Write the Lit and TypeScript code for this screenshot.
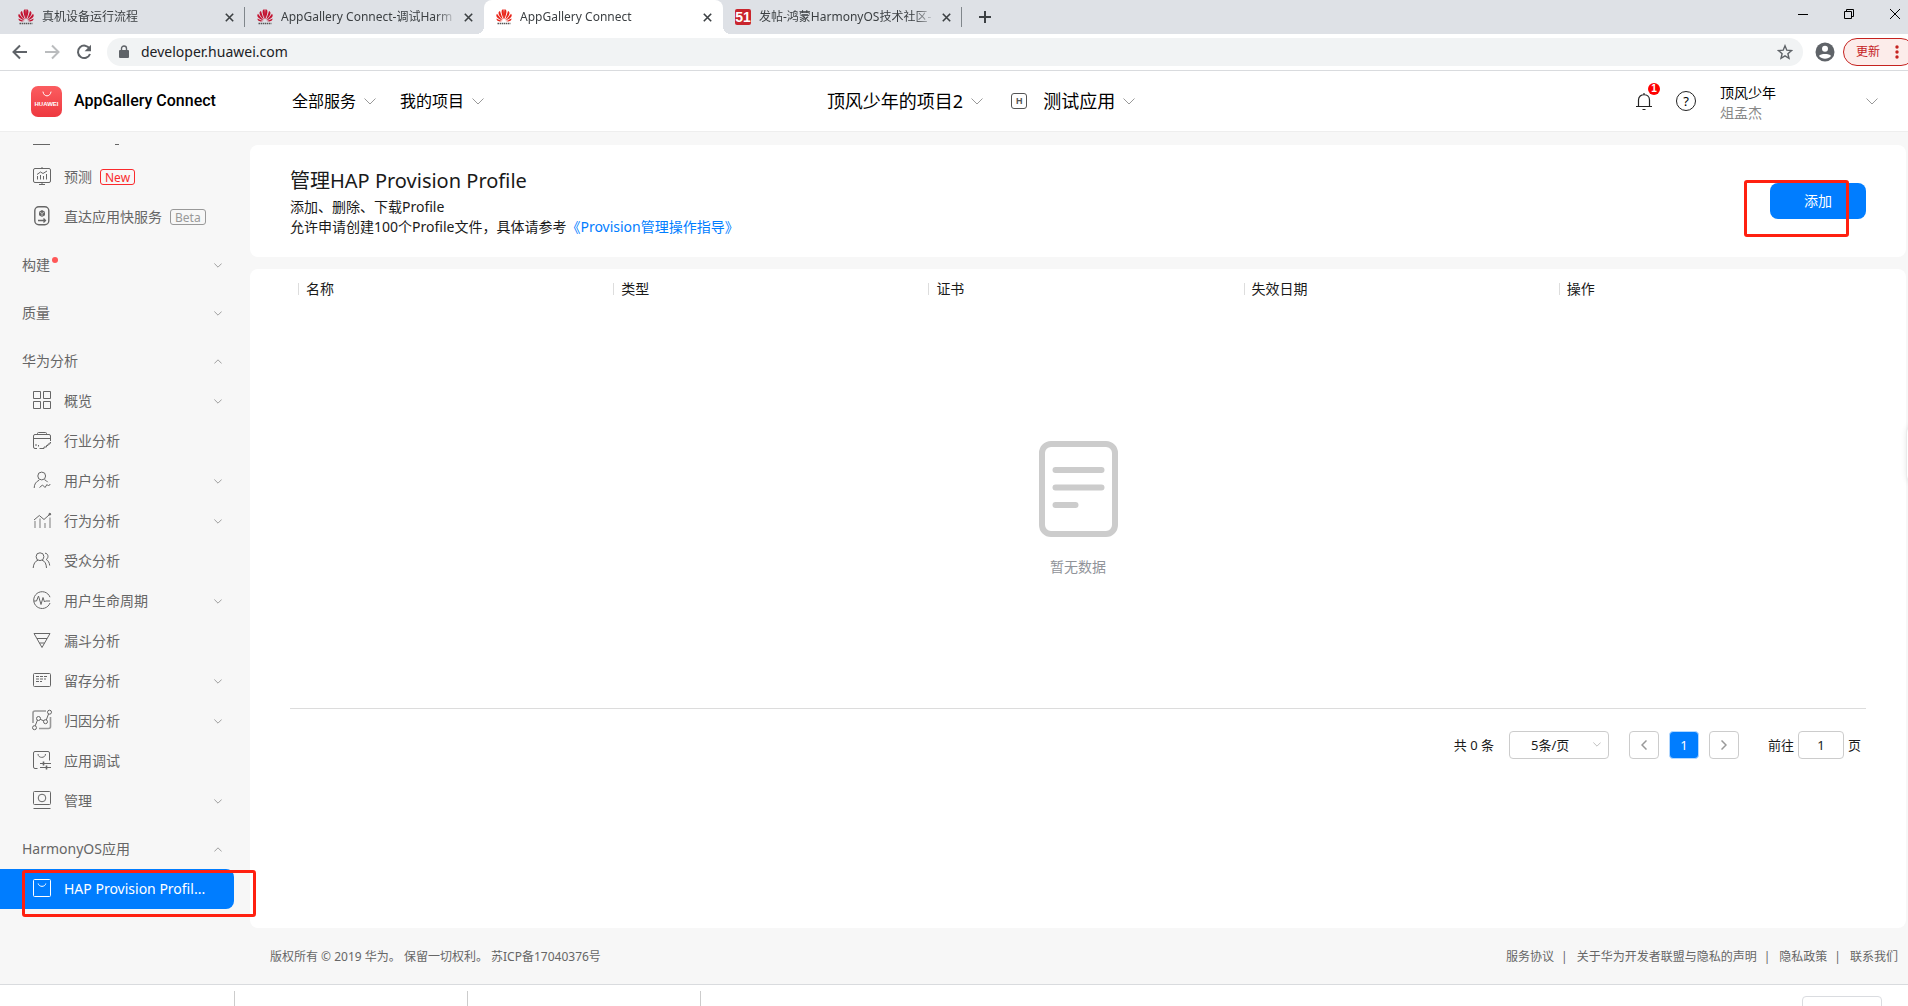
import { LitElement, html, css, svg, nothing } from "lit";
import { customElement } from "lit/decorators.js";
import { classMap } from "lit/directives/class-map.js";

const icons: Record<string, unknown> = {
  predict: svg`<rect x="1.5" y="1.5" width="17" height="14" rx="1.5"/><path d="M10 0v1.5M7 17.5h6M10 15.5v2M5.5 12.500V9M8.500 12.500V8M11.500 12.500V9M14.500 12.500V7M5 7.500L8.500 5l2.500 1.500L15 4"/>`,
  quick: svg`<rect x="2.800" y="-.2" width="14" height="18" rx="4" stroke-width="1.400"/><path d="M10 3l3 1.700v3.500l-3 1.800-3-1.800V4.700z" fill="currentColor" stroke="none"/><path d="M10 6.500l2.500-1.500M10 6.500L7.500 5M10 6.500v3" stroke="#f7f7f7" stroke-width=".6"/><path d="M6 13.500h7.500M11.500 11.500l2 2-2 2" stroke-width="1.300"/>`,
  grid: svg`<path d="M1.500.5h7v7h-7zM11.500.5h7v7h-7zM1.500 10.500h7v7h-7zM11.500 10.500h7v7h-7z"/>`,
  industry: svg`<path d="M5.500 3.500v-1a1 1 0 0 1 1-1h7a1 1 0 0 1 1 1v1M1.500 7.500h17.500M18.500 10V5a1.500 1.500 0 0 0-1.500-1.500H3A1.500 1.500 0 0 0 1.500 5v11A1.500 1.500 0 0 0 3 17.500h2M7.500 17.500h4.500v-1.500h2.500v-1.500h1.500v-1.500h2v-1.500h1M4 13v2M6.500 14v1.500"/>`,
  user: svg`<circle cx="9.700" cy="5" r="3.900"/><path d="M2.200 17c0-4 2-6.500 5-7.800M12.500 8.700c1.500.6 2.500 1.500 3.200 2.500M7.500 16.500l3-2.500 2.500 2.500 2-3 1.500 1.500 1.800-2"/>`,
  behavior: svg`<path d="M3 17v-7M8 17V7.500M13 17v-5M18 17V6.500" stroke="#aaa" stroke-width="1.600"/><path d="M2 9l5.300-4.500L12 8.500 17 4"/><circle cx="17.800" cy="3.200" r=".9" fill="currentColor"/>`,
  audience: svg`<circle cx="8" cy="5.700" r="3.900"/><path d="M1.200 17c.2-4 2-7 4.800-7.800M10 9.200c3 .8 4.300 3.800 4.500 7.800M13 2.200c3.200 0 4.200 4.600 1.200 6.300 2 1 3.300 3.300 3.500 6"/>`,
  life: svg`<path d="M18 6.200A8.400 8.400 0 1 0 18 12M2 10h2.500L6.500 5 9 13.500l2-7 1.500 4.500 1-1H18"/>`,
  funnel: svg`<path d="M2 2.500h16L10 16.500zM5 7.500h10M7.500 12h5"/>`,
  retain: svg`<rect x="1.500" y="2.500" width="17" height="13" rx="1"/><path d="M4 5.500h3M8 5.500h3M12 5.500h3M4 8h3M8 8h3M12 8h2M4 10.500h3M8 10.500h2"/>`,
  attrib: svg`<path d="M14 0H3a2 2 0 0 0-2 2v10M18.500 6v9.500a2 2 0 0 1-2 2H7" stroke="#999" stroke-width="1.600"/><path d="M3.200 14.800L5.500 9M8 8.200l4 1.800M14.200 9.200l2.500-6.600"/><circle cx="2.500" cy="16.700" r="2"/><circle cx="6.500" cy="7.500" r="2"/><circle cx="13.500" cy="10.700" r="2"/><circle cx="17.500" cy="1.200" r="2"/>`,
  debug: svg`<path d="M17.500 9.500V2a1.500 1.500 0 0 0-1.500-1.500H3A1.500 1.500 0 0 0 1.500 2v14A1.500 1.500 0 0 0 3 17.500h2.500M6 3c0 4.500 7.500 4.500 7.500 0M8 12.500h11M8 16.500h11"/><path d="M11.500 10.500v4M14.500 14.500v4" stroke-width="1.600"/>`,
  manage: svg`<rect x="1.500" y=".5" width="17" height="13" rx="1"/><circle cx="10" cy="7" r="3.800"/><path d="M1.500 17.500h17"/>`,
  bag: svg`<rect x="1.500" y=".5" width="17" height="17" rx="1"/><path d="M6.200 4.500c.6 3.800 7 3.800 7.600 0"/>`,
};

const icon = (name: string) =>
  html`<svg class="icon" viewBox="0 0 20 20" aria-hidden="true">${icons[name]}</svg>`;

const chevron = (up = false, size = 8) => html`<svg
  class=${classMap({ chev: true, big: size > 8, up })}
  viewBox="0 0 12 7" aria-hidden="true"><path d="M.5.500L6 6l5.500-5.500"/></svg>`;

const petals = (color: string) => html`<svg class="favicon" viewBox="0 0 16 16" aria-hidden="true">
  <g fill=${color}>
    <path d="M7.700 10.500C6.500 7 5 3.500 5.700 1.500 6 .6 7 .2 7.500.2c.6 2 .6 7 .2 10.300z"/>
    <path d="M8.300 10.500C9.500 7 11 3.500 10.300 1.500 10 .6 9 .2 8.500.2c-.6 2-.6 7-.2 10.300z"/>
    <path d="M7 10.800C4.800 9 2.400 6 2.500 3.900c0-1 .8-1.800 1.500-2 .6 2.200 2 6.200 3 8.900z"/>
    <path d="M9 10.800c2.200-1.800 4.600-4.800 4.500-6.900 0-1-.8-1.800-1.500-2-.6 2.200-2 6.200-3 8.900z"/>
    <path d="M6.600 11.400C4 10.700.6 8.900.3 6.800c-.1-.8.200-1.500.7-2 1.300 2 3.600 4.700 5.600 6.600z"/>
    <path d="M9.400 11.400c2.600-.7 6-2.500 6.300-4.600.1-.8-.2-1.500-.7-2-1.300 2-3.600 4.700-5.600 6.600z"/>
    <path d="M6.300 12C4.300 12.600 2 12.600 1 11.300c-.4-.5-.5-1.100-.5-1.700 1.700 1 4 1.900 5.800 2.400z"/>
    <path d="M9.700 12c2 .6 4.300.6 5.300-.7.400-.5.500-1.100.5-1.700-1.700 1-4 1.900-5.800 2.400z"/>
  </g>
  <path d="M1.500 14.500h13" stroke="#555" stroke-width="1.600" stroke-dasharray="1.500 .6"/>
</svg>`;

interface Tab { title: string; fav: "dim" | "hw" | "51"; active?: boolean; sep?: boolean }
const tabs: Tab[] = [
  { title: "真机设备运行流程", fav: "dim", sep: true },
  { title: "AppGallery Connect-调试Harm", fav: "dim" },
  { title: "AppGallery Connect", fav: "hw", active: true },
  { title: "发帖-鸿蒙HarmonyOS技术社区-", fav: "51", sep: true },
];

interface Item { label: string; icon?: string; tag?: string; open?: boolean; closed?: boolean; dot?: boolean; active?: boolean }
const menu: Item[] = [
  { label: "预测", icon: "predict", tag: "New" },
  { label: "直达应用快服务", icon: "quick", tag: "Beta" },
  { label: "构建", closed: true, dot: true },
  { label: "质量", closed: true },
  { label: "华为分析", open: true },
  { label: "概览", icon: "grid", closed: true },
  { label: "行业分析", icon: "industry" },
  { label: "用户分析", icon: "user", closed: true },
  { label: "行为分析", icon: "behavior", closed: true },
  { label: "受众分析", icon: "audience" },
  { label: "用户生命周期", icon: "life", closed: true },
  { label: "漏斗分析", icon: "funnel" },
  { label: "留存分析", icon: "retain", closed: true },
  { label: "归因分析", icon: "attrib", closed: true },
  { label: "应用调试", icon: "debug" },
  { label: "管理", icon: "manage", closed: true },
  { label: "HarmonyOS应用", open: true },
  { label: "HAP Provision Profil...", icon: "bag", active: true },
];

const columns = ["名称", "类型", "证书", "失效日期", "操作"];
const legal = ["服务协议", "关于华为开发者联盟与隐私的声明", "隐私政策", "联系我们"];

@customElement("app-root")
export class AppRoot extends LitElement {
  static styles = css`
    :host {
      display: block;
      font: 14px/20px "Noto Sans", "Noto Sans CJK SC", sans-serif;
      color: #1a1a1a;
    }
    * { box-sizing: border-box; }
    button, input, select { font: inherit; color: inherit; }
    button { border: 0; padding: 0; background: none; display: flex; align-items: center; justify-content: center; }
    a { color: inherit; text-decoration: none; }
    svg { display: block; fill: none; flex: none; }
    .page { display: flex; flex-direction: column; height: 100vh; min-height: 1006px; overflow: hidden; position: relative; background: #f7f7f7; }

    .tabs { display: flex; align-items: stretch; height: 34px; background: #dee1e6; padding-left: 6px; flex: none; }
    .tab { display: flex; align-items: center; width: 239px; padding: 0 8px 0 12px; position: relative; font-size: 12px; color: #3c4043; }
    .tab.active { background: #fff; border-radius: 8px 8px 0 0; }
    .tab.active::before, .tab.active::after { content: ""; position: absolute; bottom: 0; width: 8px; height: 8px; }
    .tab.active::before { left: -8px; background: radial-gradient(circle at 0 0, transparent 8px, #fff 8px); }
    .tab.active::after { right: -8px; background: radial-gradient(circle at 100% 0, transparent 8px, #fff 8px); }
    .tab.sep::after { content: ""; position: absolute; right: 0; top: 7px; width: 1px; height: 20px; background: #80868b; }
    .favicon { width: 16px; height: 16px; margin-right: 8px; }
    .fav51 { width: 16px; height: 16px; margin-right: 8px; border-radius: 2px; background: #c9252d; color: #fff; font: 700 14px/16px "Liberation Sans Narrow", "Liberation Sans", sans-serif; text-align: center; flex: none; }
    .tab-title { flex: 1; white-space: nowrap; overflow: hidden; margin-right: 4px; mask-image: linear-gradient(90deg, #000 155px, transparent 176px); }
    .tab-x { width: 16px; height: 16px; }
    .tab-x svg { width: 9px; height: 9px; stroke: #3c4043; stroke-width: 1.600; }
    .new-tab { width: 28px; height: 34px; margin-left: 9px; }
    .new-tab svg { width: 12px; height: 12px; stroke: #3c4043; stroke-width: 2; }
    .win { display: flex; margin-left: auto; margin-right: -10px; }
    .win button { width: 46px; height: 28px; }
    .win svg { width: 10px; height: 10px; stroke: #000; }

    .bar { display: flex; align-items: center; height: 37px; background: #fff; border-bottom: 1px solid #d9dbde; padding-left: 4px; flex: none; overflow: hidden; }
    .nav { width: 32px; height: 32px; flex: none; }
    .nav svg { width: 16px; height: 16px; stroke: #5f6368; stroke-width: 2; }
    .nav.off svg { stroke: #babcbe; }
    .omni { display: flex; align-items: center; flex: 1; height: 28px; margin-left: 7px; padding: 0 10px 0 12px; border-radius: 14px; background: #f1f3f4; }
    .omni input { flex: 1; border: 0; outline: 0; background: none; padding: 0; margin-left: 12px; color: #202124; }
    .lock { width: 10px; height: 14px; }
    .star { width: 16px; height: 16px; stroke: #5f6368; stroke-width: 1.400; }
    .avatar { margin-left: 12px; }
    .avatar svg { width: 20px; height: 20px; }
    .update { width: 72px; height: 28px; margin: 0 -7px 0 8px; border: 1px solid #c5221f; border-radius: 14px; background: #fcecea; color: #c5221f; font-size: 12px; justify-content: flex-start; padding-left: 12px; flex: none; }
    .update svg { width: 4px; height: 14px; margin-left: 15px; fill: #c5221f; }

    .head { display: flex; align-items: center; height: 61px; flex: none; background: #fff; border-bottom: 1px solid #eee; color: #000; }
    .head button { gap: 8px; }
    .left { display: flex; align-items: center; flex: 15 1 0; padding-left: 31px; font-size: 16px; }
    .logo { width: 31px; height: 31px; border-radius: 7px; background: linear-gradient(#fb5d60, #ee383f); display: flex; flex-direction: column; align-items: center; padding-top: 5px; color: #fff; font: 700 6px/8px "Liberation Sans", sans-serif; }
    .logo svg { width: 12px; height: 7px; stroke: #fff; margin-bottom: 2px; }
    .brand { font: 500 16px/24px Roboto, sans-serif; margin: 0 76px 0 12px; white-space: nowrap; }
    .svc { margin-right: 24px; }
    .mid { display: flex; align-items: center; font-size: 18px; }
    .mid .h { width: 16px; height: 16px; border: 1px solid #555; border-radius: 3px; color: #555; font: 700 9px/14px "Liberation Sans", sans-serif; text-align: center; margin: 0 16px 0 28px; }
    .right { display: flex; align-items: center; flex: 14 1 0; justify-content: flex-end; padding-right: 30px; }
    .bell { position: relative; width: 16px; height: 20px; margin-right: 24px; }
    .bell svg { width: 16px; height: 20px; stroke: #222; stroke-width: 1.200; }
    .badge { position: absolute; left: 12px; top: -8px; width: 12px; height: 12px; border-radius: 6px; background: #f00; color: #fff; font: 700 10px/12px "Liberation Sans", sans-serif; }
    .help { width: 20px; height: 20px; border: 1px solid #222; border-radius: 10px; font-size: 13px; margin-right: 24px; }
    .who { width: 146px; padding-top: 4px; line-height: 20px; }
    .who small { display: block; font-size: 14px; color: #888; }

    .chev { width: 8px; height: 5px; stroke: #999; stroke-width: 1.400; }
    .chev.big { width: 12px; height: 7px; stroke: #999; stroke-width: 1; }
    .chev.up { transform: scaleY(-1); }

    .body { display: flex; flex: 1; min-height: 0; }
    .side { width: 250px; padding-top: 12px; color: #666; flex: none; }
    .cut { display: block; width: 250px; height: 13px; stroke: #666; }
    .item { display: flex; align-items: center; height: 40px; width: 234px; padding: 0 12px 0 32px; border-radius: 0 8px 8px 0; white-space: nowrap; }
    .item .chev { margin: 0 0 0 auto; width: 8px; }
    .item .tag { margin-left: 8px; height: 16px; padding: 0 4px; border: 1px solid #999; border-radius: 3px; color: #999; font-size: 12px; line-height: 15px; }
    .item .tag.new { border-color: #fa2a2d; color: #fa2a2d; }
    .item.section { margin-top: 8px; padding-left: 22px; }
    .item.active { background: #007dff; color: #fff; }
    .item .dot { width: 6px; height: 6px; border-radius: 3px; background: #ff5757; margin: 0 0 10px 2px; }
    .icon { width: 20px; height: 20px; margin-right: 12px; stroke: currentColor; stroke-width: 1; overflow: visible; }

    .main { flex: 1; display: flex; flex-direction: column; min-width: 0; padding: 13px 2px 0 0; }
    .card { background: #fff; border-radius: 8px; padding: 0 40px; }
    .intro { display: flex; align-items: center; justify-content: space-between; height: 112px; margin-bottom: 12px; flex: none; }
    .intro-text { padding-top: 4px; }
    h1 { font-size: 20px; font-weight: 400; line-height: 24px; margin: 0 0 4px; }
    .intro p { margin: 0; }
    .intro a { color: #007dff; }
    .add { width: 96px; height: 36px; border-radius: 8px; background: #007dff; color: #fff; }
    .list { flex: 1; }
    table { width: 100%; border-collapse: collapse; table-layout: fixed; }
    th { height: 42px; padding: 0 0 2px 8px; text-align: left; font-weight: 400; }
    th span { display: block; border-left: 1px solid #ddd; padding-left: 7px; line-height: 12px; }
    td { padding: 130px 0 131px; border-bottom: 1px solid #dcdcdc; text-align: center; color: #909399; }
    td svg { width: 79px; height: 96px; margin: 0 auto 20px; stroke: #ccc; stroke-width: 6; stroke-linecap: round; }
    .pager { display: flex; align-items: center; justify-content: flex-end; padding: 22px 5px 0 0; font-size: 13px; }
    .size { position: relative; margin: 0 20px 0 15px; }
    .size select { display: block; appearance: none; width: 100px; height: 28px; padding: 0 0 0 21px; border: 1px solid #ccc; border-radius: 4px; background: #fff; }
    .size .chev { position: absolute; right: 8px; top: 11px; stroke: #bbb; }
    .pg { width: 30px; height: 28px; border: 1px solid #ccc; border-radius: 4px; margin-right: 10px; }
    .pg svg { width: 6px; height: 10px; stroke: #999; stroke-width: 1.500; }
    .pg.on { background: #007dff; border-color: #b3d8ff; color: #fff; }
    .pager label { display: flex; align-items: center; gap: 4px; margin-left: 19px; }
    .pager input { width: 46px; height: 28px; border: 1px solid #ccc; border-radius: 4px; text-align: center; padding: 0; }
    .foot { display: flex; justify-content: space-between; align-items: center; height: 56px; padding: 2px 8px 0 20px; font-size: 12px; color: #666; flex: none; }
    .foot nav { display: flex; }
    .foot a + a::before { content: "|"; margin: 0 9px 0 7px; }
    .shelf { display: flex; height: 22px; border-top: 1px solid #d9dbde; background: #fff; flex: none; padding-top: 6px; }
    .shelf i { width: 233px; border-right: 1px solid #ccc; }
    .shelf i:first-child { width: 235px; }
    .shelf button { width: 80px; height: 28px; margin: 5px 26px 0 auto; border: 1px solid #dadce0; border-radius: 4px; }
    .float { position: absolute; left: 100%; top: 425px; width: 40px; height: 58px; margin-left: -1px; border-radius: 8px; background: #fff; box-shadow: 0 0 6px rgba(0, 0, 0, 0.12); }
    .mark { position: absolute; border: 3px solid #ff2010; border-radius: 3px; pointer-events: none; }
    .mark.m1 { left: 22px; top: 870px; width: 234px; height: 47px; }
    .mark.m2 { right: 59px; top: 180px; width: 105px; height: 57px; }
  `;

  private renderTab(t: Tab) {
    return html`<div class=${classMap({ tab: true, active: !!t.active, sep: !!t.sep })}>
      ${t.fav === "51" ? html`<span class="fav51">51</span>` : petals(t.fav === "hw" ? "#e9261c" : "#c31432")}
      <span class="tab-title">${t.title}</span>
      <button class="tab-x" aria-label="关闭"><svg viewBox="0 0 9 9"><path d="M.8.800l7.400 7.400M8.200.8L.8 8.200"/></svg></button>
    </div>`;
  }

  private renderItem(m: Item) {
    return html`<a href="#" class=${classMap({ item: true, section: !m.icon, active: !!m.active })}>
      ${m.icon ? icon(m.icon) : nothing}<span>${m.label}</span>
      ${m.dot ? html`<span class="dot"></span>` : nothing}
      ${m.tag ? html`<span class=${classMap({ tag: true, new: m.tag === "New" })}>${m.tag}</span>` : nothing}
      ${m.open || m.closed ? chevron(m.open) : nothing}
    </a>`;
  }

  render() {
    return html`<div class="page">
      <div class="tabs">
        ${tabs.map((t) => this.renderTab(t))}
        <button class="new-tab" aria-label="新标签页"><svg viewBox="0 0 12 12"><path d="M6 0v12M0 6h12"/></svg></button>
        <div class="win">
          <button aria-label="最小化"><svg viewBox="0 0 10 10"><path d="M0 5.500h10"/></svg></button>
          <button aria-label="还原"><svg viewBox="0 0 10 10"><path d="M.5 2.500h7v7h-7zM2.500 2.500v-2h7v7h-2"/></svg></button>
          <button aria-label="关闭窗口"><svg viewBox="0 0 10 10"><path d="M0 0l10 10M10 0L0 10"/></svg></button>
        </div>
      </div>
      <div class="bar">
        <button class="nav" aria-label="后退"><svg viewBox="0 0 16 16"><path d="M15 8H2M8 1.500L1.500 8 8 14.500"/></svg></button>
        <button class="nav off" aria-label="前进"><svg viewBox="0 0 16 16"><path d="M1 8h13M8 1.500L14.500 8 8 14.500"/></svg></button>
        <button class="nav" aria-label="刷新"><svg viewBox="0 0 16 16"><path d="M13.600 4.800A6.200 6.200 0 1 0 14 10"/><path d="M15 .8v6.400H8.600z" fill="#5f6368" stroke="none"/></svg></button>
        <div class="omni">
          <svg class="lock" viewBox="0 0 10 14"><path d="M2.500 6V3.500a2.500 2.500 0 0 1 5 0V6" stroke="#5f6368" stroke-width="1.400"/><rect y="5" width="10" height="8" rx="1" fill="#5f6368"/></svg>
          <input aria-label="地址" .value=${"developer.huawei.com"} />
          <svg class="star" viewBox="0 0 16 16"><path d="M8 1.800l1.800 4.400 4.700.4-3.600 3.100 1.100 4.600L8 11.800l-4 2.500 1.100-4.600L1.500 6.600l4.700-.4z"/></svg>
        </div>
        <button class="avatar" aria-label="用户"><svg viewBox="0 0 20 20"><circle cx="10" cy="10" r="9.500" fill="#5f6368"/><circle cx="10" cy="6.800" r="3" fill="#fff"/><path d="M4 14c1.500-2.600 10.500-2.600 12 0-3 3.600-9 3.600-12 0z" fill="#fff"/></svg></button>
        <button class="update">更新<svg viewBox="0 0 4 14"><circle cx="2" cy="2" r="1.700"/><circle cx="2" cy="7" r="1.700"/><circle cx="2" cy="12" r="1.700"/></svg></button>
      </div>
      <header class="head">
        <div class="left">
          <span class="logo"><svg viewBox="0 0 12 7"><path d="M2 1c.8 5.300 7.200 5.300 8 0" stroke-linecap="round"/></svg>HUAWEI</span>
          <span class="brand">AppGallery Connect</span>
          <button class="svc">全部服务${chevron(false, 12)}</button>
          <button>我的项目${chevron(false, 12)}</button>
        </div>
        <div class="mid">
          <button>顶风少年的项目2${chevron(false, 12)}</button>
          <span class="h">H</span>
          <button>测试应用${chevron(false, 12)}</button>
        </div>
        <div class="right">
          <button class="bell" aria-label="消息"><svg viewBox="0 0 16 20"><path d="M2.500 15.500V9c0-7 11-7 11 0v6.500M0 15.500h16M6.500 18.500h3M8 2V3.500"/></svg><span class="badge">1</span></button>
          <button class="help" aria-label="帮助">?</button>
          <div class="who">顶风少年<small>俎孟杰</small></div>
          ${chevron(false, 12)}
        </div>
      </header>
      <div class="body">
        <nav class="side">
          <svg class="cut" viewBox="0 0 250 13"><path d="M33 .5h17M115 .5h4"/></svg>
          ${menu.map((m) => this.renderItem(m))}
        </nav>
        <main class="main">
          <section class="card intro">
            <div class="intro-text">
              <h1>管理HAP Provision Profile</h1>
              <p>添加、删除、下载Profile</p>
              <p>允许申请创建100个Profile文件，具体请参考<a href="#">《Provision管理操作指导》</a></p>
            </div>
            <button class="add">添加</button>
          </section>
          <section class="card list">
            <table>
              <thead><tr>${columns.map((c) => html`<th scope="col"><span>${c}</span></th>`)}</tr></thead>
              <tbody><tr><td colspan="5">
                <svg viewBox="0 0 79 96" aria-hidden="true"><rect x="3" y="3" width="73" height="90" rx="9"/><path d="M16.500 29h46M16.500 46.500h46M16.500 64h20"/></svg>
                暂无数据
              </td></tr></tbody>
            </table>
            <div class="pager">
              <span>共 0 条</span>
              <span class="size"><select aria-label="每页条数"><option>5条/页</option></select>${chevron()}</span>
              <button class="pg" aria-label="上一页"><svg viewBox="0 0 6 10"><path d="M5.500.500L1 5l4.500 4.500"/></svg></button>
              <button class="pg on">1</button>
              <button class="pg" aria-label="下一页"><svg viewBox="0 0 6 10"><path d="M.5.500L5 5 .5 9.500"/></svg></button>
              <label>前往<input .value=${"1"} />页</label>
            </div>
          </section>
          <footer class="foot">
            <span>版权所有 © 2019 华为。 保留一切权利。 苏ICP备17040376号</span>
            <nav>${legal.map((l) => html`<a href="#">${l}</a>`)}</nav>
          </footer>
        </main>
      </div>
      <div class="shelf"><i></i><i></i><i></i><button aria-label="全部显示"></button></div>
      <div class="float"></div>
      <div class="mark m1"></div>
      <div class="mark m2"></div>
    </div>`;
  }
}
